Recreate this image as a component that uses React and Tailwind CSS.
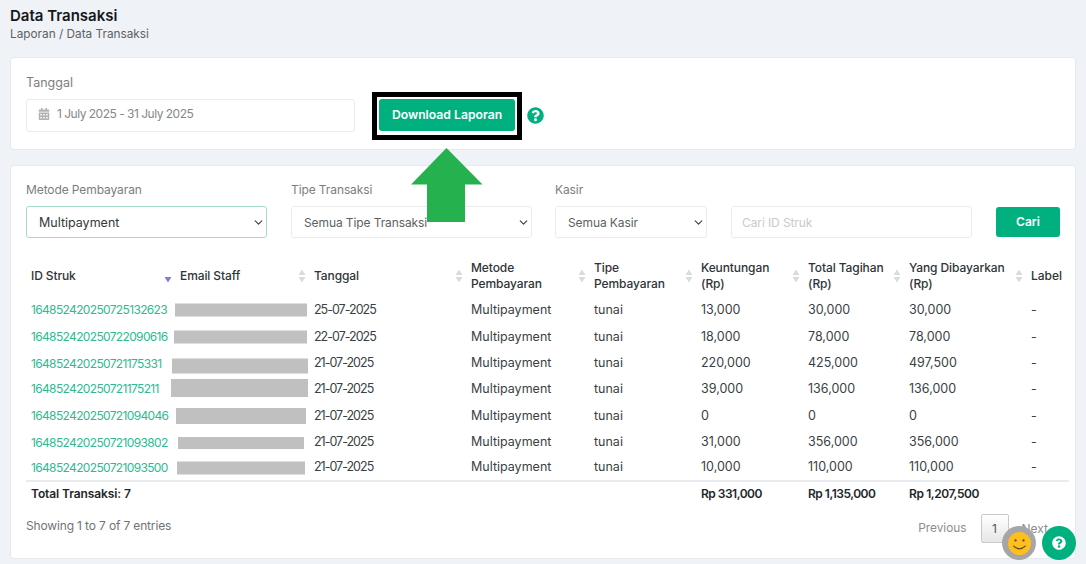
import React from "react";
import { FaQuestionCircle, FaCalendarAlt } from "react-icons/fa";
import { ChevronDown } from "lucide-react";

const rows = [
  ["164852420250725132623", "25-07-2025", "13,000", "30,000", "30,000", 149, 132, "h-[13px]", "h-[26px]", ""],
  ["164852420250722090616", "22-07-2025", "18,000", "78,000", "78,000", 148, 133, "h-[13px]", "h-[28px]", ""],
  ["164852420250721175331", "21-07-2025", "220,000", "425,000", "497,500", 146, 136, "h-[15px]", "h-[25px]", "mt-[2px]"],
  ["164852420250721175211", "21-07-2025", "39,000", "136,000", "136,000", 145, 137, "h-[18px]", "h-[26px]", "-mt-[1px]"],
  ["164852420250721094046", "21-07-2025", "0", "0", "0", 150, 130, "h-[16px]", "h-[28px]", ""],
  ["164852420250721093802", "21-07-2025", "31,000", "356,000", "356,000", 152, 126, "h-[12px]", "h-[25px]", ""],
  ["164852420250721093500", "21-07-2025", "10,000", "110,000", "110,000", 151, 128, "h-[13px]", "h-[26px]", ""],
];

const Sort = ({ active }) => (
  <svg className="absolute right-[3px] top-1/2 -translate-y-1/2 -mt-[2px]" width="8" height="14" viewBox="0 0 8 14">
    {!active && <path d="M4 0.5 L7.5 6 H0.5 Z" fill="#d9dbdd" />}
    <path d="M4 13.5 L7.5 8 H0.5 Z" fill={active ? "#7b7fd8" : "#d9dbdd"} />
  </svg>
);

const Th = ({ children, active }) => (
  <th className="relative pl-[5px] pr-[12px] pb-[5px] text-left font-medium text-[12px] tracking-[-0.1px] leading-[16px] text-[#2f3438] align-middle">
    {children}
    <Sort active={active} />
  </th>
);

const Field = ({ label, className, value, active }) => (
  <div className={className}>
    <label className="block text-[12px] tracking-[-0.1px] leading-[16px] text-[#7d7d7d] mb-[8px]">{label}</label>
    <div className="relative">
      <select
        defaultValue={value}
        className={`appearance-none w-full h-[32px] bg-white rounded-[3px] border pl-[12px] pt-[2px] ${active ? "border-[#a5dcc9] text-[#33383c] text-[12.5px]" : "border-[#e9ebee] text-[#5b5f63] text-[12px] tracking-[-0.1px]"}`}
      >
        <option>{value}</option>
      </select>
      <ChevronDown className="absolute right-[2px] top-[10px] text-[#444]" size={13} strokeWidth={2.2} />
    </div>
  </div>
);

export default function App() {
  return (
    <div className="relative w-[1086px] h-[564px] overflow-hidden bg-[#eff2f6] px-[10px] pt-[7px] font-['Inter',sans-serif] text-[12.5px]">
      <h1 className="text-[15px] leading-[18px] font-semibold text-[#15181b]">Data Transaksi</h1>
      <p className="text-[11.8px] leading-[16px] mt-[1px] text-[#5c6166]">Laporan / Data Transaksi</p>

      <section className="relative mt-[15px] h-[93px] w-[1066px] bg-white rounded-[4px] border border-[#e6e9ed] pl-[15px] pt-[17px] flex items-start">
        <div>
          <label className="block text-[12.5px] leading-[16px] text-[#7d7d7d] mb-[8px]">Tanggal</label>
          <div className="w-[329px] h-[33px] rounded-[3px] border border-[#e9ebee] flex items-center pl-[11px] pb-[3px] text-[12px] tracking-[-0.5px] text-[#85888b]">
            <FaCalendarAlt className="text-[#b3b3b3] mr-[7px]" size={12} />
            1 July 2025 - 31 July 2025
          </div>
        </div>
        <button className="ml-[24px] mt-[24px] w-[136px] h-[32px] rounded-[3px] bg-[#00b07f] text-white text-[12.2px] font-semibold relative">
          Download Laporan
          <span className="absolute left-[-7px] top-[-7px] w-[150px] h-[48px] border-[5px] border-black" />
        </button>
        <FaQuestionCircle className="ml-[12px] mt-[32px] text-[#00b07f]" size={17} />
      </section>

      <section className="mt-[15px] h-[394px] w-[1066px] bg-white rounded-[4px] border border-[#e6e9ed] pl-[15px] pt-[16px]">
        <div className="flex items-end">
          <Field className="w-[241px]" label="Metode Pembayaran" value="Multipayment" active />
          <Field className="w-[241px] ml-[24px]" label="Tipe Transaksi" value="Semua Tipe Transaksi" />
          <Field className="w-[152px] ml-[23px]" label="Kasir" value="Semua Kasir" />
          <input
            placeholder="Cari ID Struk"
            className="w-[241px] h-[32px] ml-[24px] rounded-[3px] border border-[#e9ebee] pl-[10px] text-[12px] tracking-[-0.1px] placeholder:text-[#c8cacc]"
          />
          <button className="w-[64px] h-[30px] mb-[1px] ml-[24px] rounded-[3px] bg-[#00b07f] text-white text-[12px] font-semibold">Cari</button>
        </div>

        <table className="mt-[21px] w-[1043px] table-fixed border-collapse">
          <colgroup>
            {[149, 134, 157, 123, 107, 107, 101, 122, 43].map((w, i) => (
              <col key={i} style={{ width: w }} />
            ))}
          </colgroup>
          <thead>
            <tr className="h-[38px]">
              <Th active>ID Struk</Th>
              <Th>Email Staff</Th>
              <Th>Tanggal</Th>
              <Th>Metode Pembayaran</Th>
              <Th>Tipe Pembayaran</Th>
              <Th>Keuntungan (Rp)</Th>
              <Th>Total Tagihan (Rp)</Th>
              <Th>Yang Dibayarkan (Rp)</Th>
              <th className="pl-[5px] pb-[5px] text-left font-medium text-[12px] text-[#2f3438]">Label</th>
            </tr>
          </thead>
          <tbody>
            {rows.map((r) => (
              <tr key={r[0]} className={`${r[8]} text-[#3a3f44]`}>
                <td className="pl-[5px] text-[#2dba93] whitespace-nowrap text-[12px] tracking-[-0.65px]">{r[0]}</td>
                <td className="relative">
                  <span
                    className={`absolute top-1/2 -translate-y-1/2 bg-[#c0c0c0] ${r[7]} ${r[9]}`}
                    style={{ left: r[5] - 149, width: r[6] }}
                  />
                </td>
                <td className="pl-[5px] tracking-[-1px]">{r[1]}</td>
                <td className="pl-[5px]">Multipayment</td>
                <td className="pl-[5px]">tunai</td>
                <td className="pl-[5px]">{r[2]}</td>
                <td className="pl-[5px]">{r[3]}</td>
                <td className="pl-[5px]">{r[4]}</td>
                <td className="pl-[5px]">-</td>
              </tr>
            ))}
            <tr className="h-[24px] border-t-2 border-[#e9ebee] font-semibold text-[#23272b] text-[12px]">
              <td className="pl-[5px] whitespace-nowrap tracking-[-0.1px]" colSpan={5}>Total Transaksi: 7</td>
              <td className="pl-[5px] tracking-[-0.5px]">Rp 331,000</td>
              <td className="pl-[5px] tracking-[-0.5px]">Rp 1,135,000</td>
              <td className="pl-[5px] tracking-[-0.4px]" colSpan={2}>Rp 1,207,500</td>
            </tr>
          </tbody>
        </table>

        <div className="flex items-start mt-[9px] pr-[27px]">
          <span className="mt-[3px] text-[12px] tracking-[-0.15px] text-[#6f7377]">Showing 1 to 7 of 7 entries</span>
          <div className="ml-auto flex items-center">
            <span className="text-[11.8px] text-[#8a8d90] mr-[14px]">Previous</span>
            <span className="w-[28px] h-[29px] rounded-[2px] border border-[#c9c9c9] bg-gradient-to-b from-white to-[#e6e6e6] flex items-center justify-center text-[12px] text-[#555]">1</span>
            <span className="text-[12px] text-[#8a8d90] ml-[13px]">Next</span>
          </div>
        </div>
      </section>

      {/* big green arrow annotation */}
      <svg className="absolute left-[410px] top-[147px]" width="74" height="76" viewBox="0 0 74 76">
        <path d="M36.5 1 L72.5 37.5 H55 V75 H17 V37.5 H1 Z" fill="#25b14d" />
      </svg>

      {/* floating widgets */}
      <div className="absolute left-[1002px] top-[526px] w-[34px] h-[34px] rounded-full bg-[#a6a6a6] flex items-center justify-center">
        <svg width="23" height="23" viewBox="0 0 26 26">
          <circle cx="13" cy="13" r="13" fill="#fdbe1e" />
          <circle cx="8.5" cy="9.5" r="1.3" fill="#5b4a1b" />
          <circle cx="17.5" cy="9.5" r="1.3" fill="#5b4a1b" />
          <path d="M6.5 16 Q13 22 19.5 16" fill="none" stroke="#5b4a1b" strokeWidth="1.4" strokeLinecap="round" />
        </svg>
      </div>
      <div className="absolute left-[1042px] top-[526px] w-[34px] h-[34px] rounded-full bg-[#00b07f] flex items-center justify-center">
        <FaQuestionCircle className="text-white" size={14} />
      </div>
    </div>
  );
}
